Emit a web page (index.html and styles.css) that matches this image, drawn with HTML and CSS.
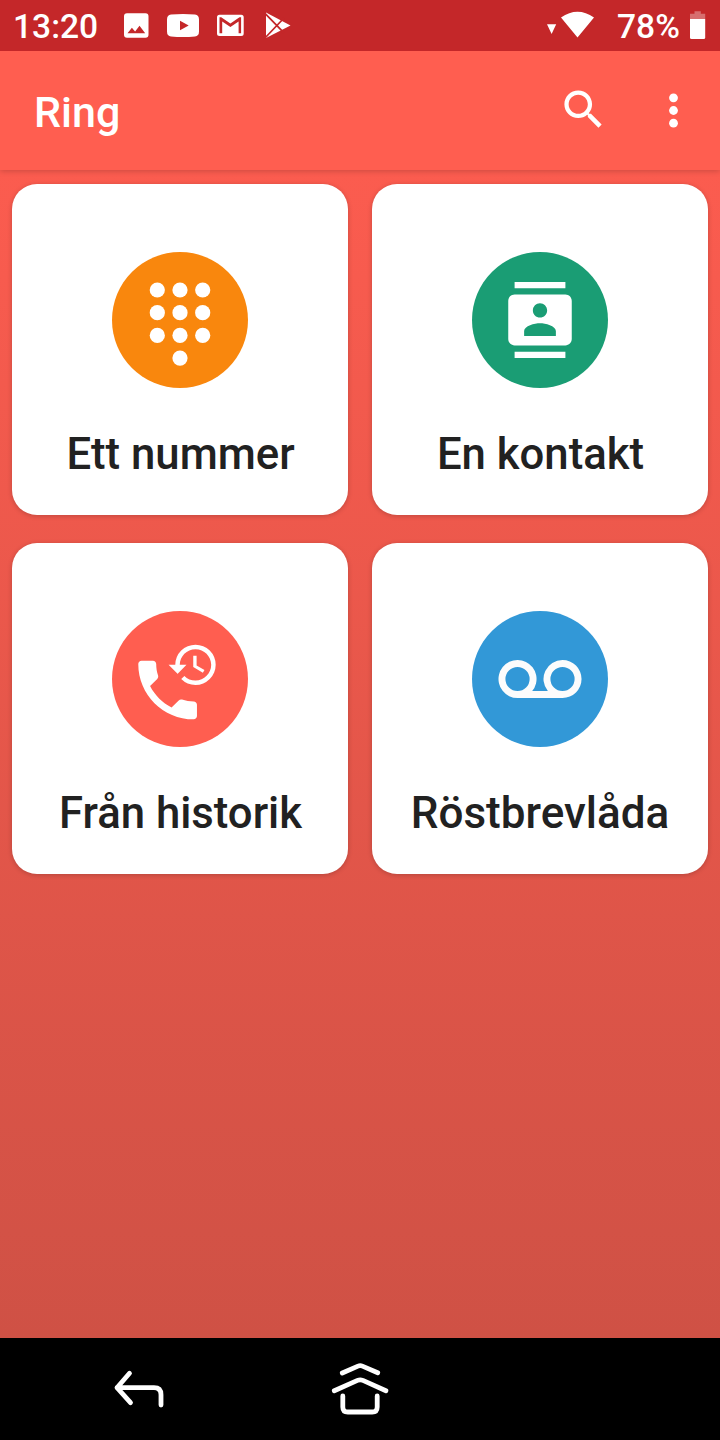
FILE: index.html
```html
<!DOCTYPE html>
<html lang="sv">
<head>
<meta charset="utf-8">
<title>Ring</title>
<link rel="stylesheet" href="styles.css">
</head>
<body>
<div class="screen">
  <header class="status">
    <span class="clock">13:20</span>
    <svg class="notices" width="176" height="51" viewBox="120 0 176 51">
      <path fill-rule="evenodd" d="M127 13.200h18.500a3 3 0 0 1 3 3v18.500a3 3 0 0 1-3 3H127a3 3 0 0 1-3-3V16.200a3 3 0 0 1 3-3zM127.500 33.300h17.700l-5.700-7.600-4.400 5.700-3.200-3.700z"/>
      <path fill-rule="evenodd" d="M171 14.500q12-1 24 0 4 .4 4 5v12q0 4.600-4 5-12 1-24 0-4-.4-4-5v-12q0-4.600 4-5zM180 20.800v9.500l8.700-4.800z"/>
      <path fill-rule="evenodd" d="M219.500 14.700h21.700a2.500 2.500 0 0 1 2.500 2.500v16.300a2.500 2.500 0 0 1-2.500 2.500h-21.700a2.500 2.500 0 0 1-2.500-2.500V17.200a2.500 2.500 0 0 1 2.500-2.500zM219.500 17.300v15.900h2.700V21.500l8.200 5.400 8.200-5.400v11.700h2.500V17.300h-1.600l-9.100 6.200-9.200-6.200z"/>
      <path d="M266 12.500L290.500 25.500 266 38z"/>
      <path class="cut" d="M264.500 12.800l19.500 20M264.500 38.500l19.500-20.500"/>
    </svg>
    <svg class="signal" width="54" height="51" viewBox="544 0 54 51">
      <path d="M547 24.300h9.200L551.600 34zM561 17.500q16.500-11.500 33 0L577.500 37.500z"/>
    </svg>
    <span class="percent">78%</span>
    <svg class="battery" width="20" height="51" viewBox="688 0 20 51">
      <path opacity=".33" d="M694.500 11.300h6.300v2.400h4.400V19H690v-5.300h4.500z"/>
      <path d="M690 19h15.200v18.500q0 1.500-1.500 1.500h-12.200q-1.500 0-1.500-1.500z"/>
    </svg>
  </header>

  <div class="appbar">
    <h1 class="title">Ring</h1>
    <svg class="search" width="51.120" height="51.120" viewBox="0 0 24 24"><path d="M15.500 14h-.79l-.28-.27C15.410 12.590 16 11.110 16 9.500 16 5.910 13.090 3 9.500 3S3 5.910 3 9.500 5.910 16 9.500 16c1.610 0 3.090-.59 4.230-1.570l.27.28v.79l5 4.990L20.490 19l-4.990-5zm-6 0C7.010 14 5 11.990 5 9.500S7.010 5 9.500 5 14 7.010 14 9.500 11.990 14 9.500 14z"/></svg>
    <svg class="more" width="10" height="36" viewBox="0 0 10 36"><circle cx="4.500" cy="4.800" r="4.400"/><circle cx="4.500" cy="17.500" r="4.400"/><circle cx="4.500" cy="30.200" r="4.400"/></svg>
  </div>

  <main class="grid">
    <section class="card">
      <svg class="icon" viewBox="0 0 136 136">
        <circle class="orange" cx="68" cy="68" r="68"/>
        <g><circle cx="45.300" cy="38" r="7.600"/><circle cx="68" cy="38" r="7.600"/><circle cx="90.700" cy="38" r="7.600"/>
        <circle cx="45.300" cy="60.700" r="7.600"/><circle cx="68" cy="60.700" r="7.600"/><circle cx="90.700" cy="60.700" r="7.600"/>
        <circle cx="45.300" cy="83.400" r="7.600"/><circle cx="68" cy="83.400" r="7.600"/><circle cx="90.700" cy="83.400" r="7.600"/>
        <circle cx="68" cy="106.100" r="7.600"/></g>
      </svg>
      <span class="label">Ett nummer</span>
    </section>
    <section class="card">
      <svg class="icon" viewBox="0 0 136 136">
        <circle class="green" cx="68" cy="68" r="68"/>
        <path transform="translate(29.900 29.900) scale(3.175)" d="M20 0H4v2h16V0zM4 24h16v-2H4v2zM20 4H4c-1.100 0-2 .9-2 2v12c0 1.100.9 2 2 2h16c1.100 0 2-.9 2-2V6c0-1.100-.9-2-2-2zm-8 2.750c1.240 0 2.250 1.010 2.250 2.250s-1.010 2.250-2.250 2.250S9.750 10.240 9.750 9 10.760 6.750 12 6.750zM17 17H7v-1.500c0-1.670 3.330-2.500 5-2.500s5 .83 5 2.500V17z"/>
      </svg>
      <span class="label">En kontakt</span>
    </section>
    <section class="card">
      <svg class="icon" viewBox="0 0 136 136">
        <circle class="coral" cx="68" cy="68" r="68"/>
        <path transform="translate(16.500 39.900) scale(3.260)" d="M6.620 10.790c1.440 2.830 3.760 5.140 6.590 6.590l2.200-2.200c.27-.27.67-.36 1.020-.24 1.120.37 2.330.57 3.570.57.55 0 1 .45 1 1V20c0 .55-.45 1-1 1-9.390 0-17-7.610-17-17 0-.55.45-1 1-1h3.500c.55 0 1 .45 1 1 0 1.250.2 2.450.57 3.570.11.35.03.74-.25 1.020l-2.200 2.200z"/>
        <path transform="translate(54.300 26.900) scale(2.245)" d="M13 3a9 9 0 0 0-9 9H1l3.890 3.890.07.14L9 12H6c0-3.870 3.130-7 7-7s7 3.130 7 7-3.130 7-7 7c-1.930 0-3.680-.79-4.940-2.060l-1.420 1.420A8.954 8.954 0 0 0 13 21a9 9 0 0 0 0-18zm-1 5v5l4.280 2.540.72-1.210-3.500-2.080V8H12z"/>
      </svg>
      <span class="label">Från historik</span>
    </section>
    <section class="card">
      <svg class="icon" viewBox="0 0 136 136">
        <circle class="blue" cx="68" cy="68" r="68"/>
        <path class="tape" transform="translate(26.500 28.200) scale(3.460)" d="M18.500 6a5.500 5.500 0 0 0-4.240 9H9.740A5.500 5.500 0 1 0 5.500 17h13a5.500 5.500 0 0 0 0-11zm-13 9a3.500 3.500 0 1 1 0-7 3.500 3.500 0 0 1 0 7zm13 0a3.500 3.500 0 1 1 0-7 3.500 3.500 0 0 1 0 7z"/>
      </svg>
      <span class="label wide">Röstbrevlåda</span>
    </section>
  </main>

  <nav class="navbar">
    <svg class="back" width="52" height="40" viewBox="113 1369 52 40"><path d="M129.500 1373.200L117 1387.700l13.500 15M117 1387.700h37q7 0 7 7v10.300"/></svg>
    <svg class="home" width="60" height="56" viewBox="330 1361 60 56"><path d="M342.300 1373l15.700-6.900q2.200-.9 4.400 0l15.300 6.600M334.300 1390.700l23.200-10.300q2.700-1.100 5.400 0l23 10.300M342.800 1396v11q0 5 5 5h24.400q5 0 5-5v-11"/></svg>
  </nav>
</div>
</body>
</html>
```

FILE: styles.css
```css
body {
  margin: 0;
  font-family: Roboto, "Noto Sans", sans-serif;
}

.screen {
  display: flex;
  flex-direction: column;
  width: 720px;
  height: 1440px;
  overflow: hidden;
  color: #fff;
  font-weight: 500;
}

svg {
  display: block;
  flex: none;
  fill: #fff;
}

.status {
  display: flex;
  flex: none;
  height: 51px;
  background: #c42729;
  font-size: 33.6px;
  line-height: 53px;
  white-space: nowrap;
  z-index: 2;
  position: relative;
}

.clock {
  width: 107px;
  padding-left: 13px;
}

.cut {
  fill: none;
  stroke: #c42729;
  stroke-width: 1.8;
}

.signal {
  margin-left: auto;
}

.percent {
  width: 71px;
  padding-left: 19px;
}

.battery {
  margin-right: 12px;
}

.appbar {
  display: flex;
  flex: none;
  box-sizing: border-box;
  height: 119px;
  padding: 0 41px 0 34px;
  background: #ff5e50;
  box-shadow: 0 1px 6px rgba(0, 0, 0, 0.2);
  z-index: 1;
}

.title {
  margin: 0 auto 0 0;
  font-size: 43px;
  font-weight: 500;
  line-height: 122px;
}

.search {
  margin: 33px 60px 0 0;
}

.more {
  margin-top: 42px;
}

.grid {
  display: grid;
  flex: 1;
  grid-template-columns: 336px 336px;
  grid-auto-rows: 331px;
  align-content: start;
  gap: 28px 24px;
  padding: 14px 12px;
  background: linear-gradient(#fb5c4f, #cf5145);
}

.card {
  display: flex;
  flex-direction: column;
  align-items: center;
  border-radius: 25px;
  background: #fff;
  box-shadow: 0 1px 5px rgba(0, 0, 0, 0.2);
}

.icon {
  width: 136px;
  height: 136px;
  margin-top: 68px;
}

.orange { fill: #f9870d; }
.green { fill: #1a9d74; }
.coral { fill: #ff5e50; }
.blue { fill: #3298d7; }
.tape { fill: #fcfcfc; }

.label {
  margin-top: 40px;
  padding-left: 1px;
  color: #212121;
  font-size: 43.7px;
  line-height: 53px;
}

.wide {
  padding-left: 0;
  font-size: 44px;
}

.navbar {
  display: flex;
  flex: none;
  box-sizing: border-box;
  height: 102px;
  padding: 23px 0 0 113px;
  background: #000;
}

.navbar path {
  fill: none;
  stroke: #fff;
  stroke-width: 4.8;
  stroke-linecap: round;
  stroke-linejoin: round;
}

.back {
  margin: 8px 165px 0 0;
}
```
